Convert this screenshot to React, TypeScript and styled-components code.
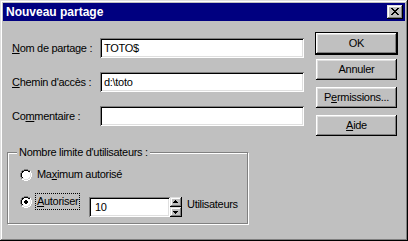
import React from "react";
import styled, { createGlobalStyle } from "styled-components";

const Global = createGlobalStyle`
  html, body { margin: 0; padding: 0; background: #c0c0c0; }
  body { font-family: "Liberation Sans", Arial, sans-serif; }
`;

const bevelOut = `inset -1px -1px 0 #000, inset 1px 1px 0 #fff, inset -2px -2px 0 #808080, inset 2px 2px 0 #dfdfdf`;
const bevelIn = `inset 1px 1px 0 #808080, inset -1px -1px 0 #fff, inset 2px 2px 0 #000, inset -2px -2px 0 #dfdfdf`;

const Window = styled.div`
  box-sizing: border-box;
  width: 408px;
  height: 241px;
  padding: 3px;
  background: #c0c0c0;
  box-shadow: inset -1px -1px 0 #000, inset 1px 1px 0 #dfdfdf,
    inset -2px -2px 0 #808080, inset 2px 2px 0 #fff;
  display: flex;
  flex-direction: column;
  font-family: "Liberation Sans", Arial, sans-serif;
  font-size: 11px;
  line-height: 13px;
  letter-spacing: -0.3px;
  color: #000;
`;

const TitleBar = styled.div`
  height: 18px;
  flex-shrink: 0;
  background: #000080;
  display: flex;
  align-items: center;
  padding: 0 2px 0 3px;
`;

const Title = styled.span`
  flex: 1;
  color: #fff;
  font-weight: bold;
  font-size: 12px;
  line-height: 18px;
  letter-spacing: 0;
  white-space: nowrap;
`;

const TitleButton = styled.button`
  box-sizing: border-box;
  width: 16px;
  height: 14px;
  padding: 0;
  margin: 0;
  border: 0;
  background: #c0c0c0;
  box-shadow: inset -1px -1px 0 #000, inset 1px 1px 0 #dfdfdf,
    inset -2px -2px 0 #808080, inset 2px 2px 0 #fff;
  display: block;
  svg { display: block; }
`;

const Body = styled.div`
  flex: 1;
  display: flex;
  padding-left: 4px;
`;

const LeftColumn = styled.div`
  width: 297px;
  display: flex;
  flex-direction: column;
  padding-top: 17px;
`;

const Fields = styled.div`
  display: flex;
  flex-direction: column;
  gap: 14px;
  padding-left: 5px;
`;

const FieldRow = styled.div`
  display: flex;
  align-items: center;
  height: 20px;
`;

const FieldLabel = styled.label`
  width: 88px;
  white-space: nowrap;
`;

const TextInput = styled.input<{ $width: number; $indent: number }>`
  box-sizing: border-box;
  width: ${(p) => p.$width}px;
  height: 20px;
  margin: 0;
  border: 0;
  padding: 0 2px 0 ${(p) => p.$indent}px;
  background: #fff;
  box-shadow: ${bevelIn};
  font: inherit;
  letter-spacing: inherit;
  color: #000;
  outline: none;
`;

const Group = styled.div`
  position: relative;
  box-sizing: border-box;
  width: 241px;
  margin-top: 26px;
  border: 1px solid #808080;
  box-shadow: inset 1px 1px 0 #fff, 1px 1px 0 #fff;
  padding: 13px 0 6px 12px;
  display: flex;
  flex-direction: column;
  gap: 10px;
`;

const GroupLegend = styled.span`
  position: absolute;
  top: -7px;
  left: 9px;
  padding: 0 2px;
  background: #c0c0c0;
  line-height: 12px;
  white-space: nowrap;
`;

const OptionRow = styled.div`
  display: flex;
  align-items: flex-start;
`;

const Choice = styled.label<{ $width?: number }>`
  display: flex;
  align-items: flex-start;
  flex-shrink: 0;
  ${(p) => (p.$width ? `width: ${p.$width}px;` : "")}
`;

const RadioSvg = styled.svg`
  display: block;
  flex-shrink: 0;
  margin-top: 3px;
`;

const ChoiceText = styled.span<{ $focused?: boolean }>`
  margin-left: 3px;
  padding: 1px;
  border: 1px dotted ${(p) => (p.$focused ? "#000" : "transparent")};
  white-space: nowrap;
`;

const NumberBox = styled.div`
  display: flex;
  margin-top: 4px;
`;

const Spinner = styled.div`
  display: flex;
  flex-direction: column;
`;

const SpinButton = styled.button`
  box-sizing: border-box;
  width: 12px;
  height: 10px;
  padding: 0;
  margin: 0;
  border: 0;
  background: #c0c0c0;
  box-shadow: inset -1px -1px 0 #000, inset 1px 1px 0 #dfdfdf,
    inset -2px -2px 0 #808080, inset 2px 2px 0 #fff;
  svg { display: block; }
`;

const Unit = styled.span`
  margin: 5px 0 0 5px;
  white-space: nowrap;
`;

const ButtonColumn = styled.div`
  margin-left: 11px;
  width: 83px;
  padding-top: 11px;
  display: flex;
  flex-direction: column;
  align-items: center;
`;

const PushButton = styled.button<{ $default?: boolean; $gap: number }>`
  box-sizing: border-box;
  width: ${(p) => (p.$default ? 83 : 81)}px;
  height: ${(p) => (p.$default ? 23 : 21)}px;
  margin: ${(p) => p.$gap}px 0 0;
  padding: 0;
  border: ${(p) => (p.$default ? "1px solid #000" : "0")};
  background: #c0c0c0;
  box-shadow: ${bevelOut};
  font: inherit;
  letter-spacing: inherit;
  color: #000;
  text-align: center;
`;

const RADIO_MAP = [
  "....gggg....",
  "..ggkkkkgg..",
  ".gkkWWWWkkh.",
  ".gkWWWWWWlh.",
  "gkWWWWWWWWlh",
  "gkWWWWWWWWlh",
  "gkWWWWWWWWlh",
  "gkWWWWWWWWlh",
  ".gkWWWWWWlh.",
  ".gllWWWWllh.",
  "..hhllllhh..",
  "....hhhh....",
];
const DOT = ["....", ".kk.", "kkkk", "kkkk", ".kk."];
const COLORS: Record<string, string> = {
  g: "#808080",
  k: "#000",
  W: "#fff",
  h: "#fff",
  l: "#dfdfdf",
};

function Radio({ checked }: { checked?: boolean }) {
  const rects: React.ReactNode[] = [];
  RADIO_MAP.forEach((row, y) =>
    row.split("").forEach((c, x) => {
      if (c !== ".") rects.push(<rect key={`${x}-${y}`} x={x} y={y} width={1} height={1} fill={COLORS[c]} />);
    })
  );
  if (checked) {
    DOT.slice(1).forEach((row, y) =>
      row.split("").forEach((c, x) => {
        if (c === "k") rects.push(<rect key={`d${x}-${y}`} x={x + 4} y={y + 4} width={1} height={1} fill="#000" />);
      })
    );
  }
  return (
    <RadioSvg width="12" height="12" viewBox="0 0 12 12" shapeRendering="crispEdges">
      {rects}
    </RadioSvg>
  );
}

function CloseGlyph() {
  const rows = ["XX....XX", ".XX..XX.", "..XXXX..", "...XX...", "..XXXX..", ".XX..XX.", "XX....XX"];
  return (
    <svg width="16" height="14" viewBox="0 0 16 14" shapeRendering="crispEdges">
      {rows.flatMap((r, y) =>
        r.split("").map((c, x) =>
          c === "X" ? <rect key={`${x}-${y}`} x={x + 4} y={y + 3} width={1} height={1} fill="#000" /> : null
        )
      )}
    </svg>
  );
}

function Arrow({ up }: { up?: boolean }) {
  const rows = up
    ? [
        [5, 3, 1],
        [4, 4, 3],
        [3, 5, 5],
      ]
    : [
        [3, 4, 5],
        [4, 5, 3],
        [5, 6, 1],
      ];
  return (
    <svg width="12" height="10" viewBox="0 0 12 10" shapeRendering="crispEdges">
      {rows.map(([x, y, w]) => (
        <rect key={y} x={x} y={y} width={w} height={1} fill="#000" />
      ))}
    </svg>
  );
}

const fields: { label: React.ReactNode; value: string }[] = [
  { label: <><u>N</u>om de partage :</>, value: "TOTO$" },
  { label: <><u>C</u>hemin d'accès :</>, value: "d:\\toto" },
  { label: <>Co<u>m</u>mentaire :</>, value: "" },
];

const buttons: { label: React.ReactNode; gap: number; isDefault?: boolean }[] = [
  { label: "OK", gap: 0, isDefault: true },
  { label: "Annuler", gap: 4 },
  { label: <>P<u>e</u>rmissions...</>, gap: 7 },
  { label: <><u>A</u>ide</>, gap: 7 },
];

export default function App() {
  return (
    <>
      <Global />
      <Window>
        <TitleBar>
          <Title>Nouveau partage</Title>
          <TitleButton aria-label="Fermer">
            <CloseGlyph />
          </TitleButton>
        </TitleBar>
        <Body>
          <LeftColumn>
            <Fields>
              {fields.map((f, i) => (
                <FieldRow key={i}>
                  <FieldLabel>{f.label}</FieldLabel>
                  <TextInput $width={204} $indent={4} defaultValue={f.value} />
                </FieldRow>
              ))}
            </Fields>
            <Group>
              <GroupLegend>Nombre limite d'utilisateurs :</GroupLegend>
              <OptionRow>
                <Choice>
                  <Radio />
                  <ChoiceText>
                    Ma<u>x</u>imum autorisé
                  </ChoiceText>
                </Choice>
              </OptionRow>
              <OptionRow>
                <Choice $width={69}>
                  <Radio checked />
                  <ChoiceText $focused>
                    <u>A</u>utoriser
                  </ChoiceText>
                </Choice>
                <NumberBox>
                  <TextInput $width={81} $indent={6} defaultValue="10" />
                  <Spinner>
                    <SpinButton aria-label="Augmenter">
                      <Arrow up />
                    </SpinButton>
                    <SpinButton aria-label="Diminuer">
                      <Arrow />
                    </SpinButton>
                  </Spinner>
                </NumberBox>
                <Unit>Utilisateurs</Unit>
              </OptionRow>
            </Group>
          </LeftColumn>
          <ButtonColumn>
            {buttons.map((b, i) => (
              <PushButton key={i} $gap={b.gap} $default={b.isDefault}>
                {b.label}
              </PushButton>
            ))}
          </ButtonColumn>
        </Body>
      </Window>
    </>
  );
}
